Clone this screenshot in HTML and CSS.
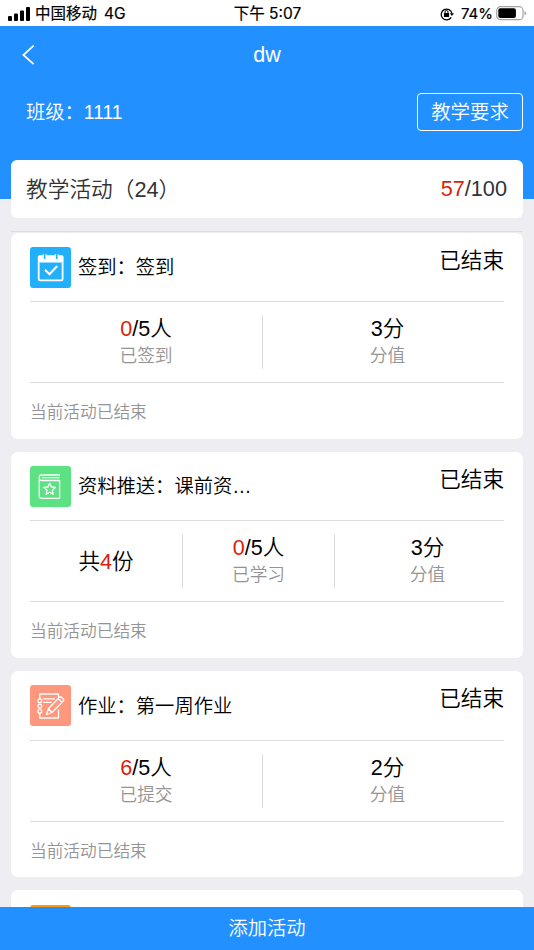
FILE: index.html
```html
<!DOCTYPE html>
<html lang="zh-CN">
<head>
<meta charset="utf-8">
<meta name="viewport" content="width=device-width, initial-scale=1">
<title>dw</title>
<link rel="stylesheet" href="styles.css">
</head>
<body>
<div class="app">
  <div class="status-bar">
    <div class="status-left">
      <svg class="signal" width="23" height="14" viewBox="0 0 23 14"><rect x="0" y="9" width="4" height="5" rx="1"/><rect x="6" y="6.5" width="4" height="7.5" rx="1"/><rect x="12" y="3.5" width="4" height="10.5" rx="1"/><rect x="18" y="0" width="4" height="14" rx="1"/></svg>
      <span class="carrier">中国移动</span><span>4G</span>
    </div>
    <div class="status-time">下午 5:07</div>
    <div class="status-right">
      <svg width="14" height="14" viewBox="0 0 14 14"><path d="M11.2 10.3A5.4 5.4 0 1 1 11.9 6.4" fill="none" stroke="#000" stroke-width="1.3"/><path d="M9.9 6.2h4L11.9 9z"/><rect x="3.9" y="6" width="5.2" height="4" rx=".6"/><path d="M5 6.3V5a1.5 1.5 0 0 1 3 0v1.3" fill="none" stroke="#000"/></svg>
      <span class="percent">74%</span>
      <svg width="31" height="15" viewBox="0 0 31 15"><rect x=".7" y=".7" width="26.3" height="13" rx="3.8" fill="none" stroke="#a4a4a4" stroke-width="1.2"/><rect x="2.3" y="2.3" width="17.6" height="9.8" rx="2"/><path d="M28.5 5v4.4q1.7-.8 1.7-2.2T28.5 5z" fill="#a4a4a4"/></svg>
    </div>
  </div>
  <header class="hero">
    <div class="nav">
      <svg class="back" width="13" height="20" viewBox="0 0 13 20"><path d="M11.6 .7 1.4 10l10.2 9.2" fill="none" stroke="#fff" stroke-width="1.7"/></svg>
      <h1>dw</h1>
    </div>
    <div class="class-row">
      <span>班级：1111</span>
      <button class="outline-button">教学要求</button>
    </div>
  </header>
  <section class="summary">
    <span class="summary-title">教学活动（24）</span>
    <span><em>57</em>/100</span>
  </section>
  <main class="list">
    <article class="card">
      <div class="card-head">
        <svg class="icon cyan" viewBox="0 0 41 41"><path d="M8.7 15.5V32q0 1.3 1.3 1.3h21.3q1.3 0 1.3-1.3V15.5" fill="none" stroke="#fff" stroke-width="1.8"/><path d="M7.8 15.5V10q0-1.8 1.8-1.8h4V11q0 1 1 1t1-1V8.200h10.200V11q0 1 1 1t1-1V8.200h4q1.800 0 1.800 1.800v5.500z" fill="#fff"/><path d="M13.200 7v3.500M16 7v3.500M25.300 7v3.500M28.100 7v3.500" stroke="#fff" stroke-width=".9"/><path d="M15 22.800l4.500 4.500 7.700-8.300" fill="none" stroke="#fff" stroke-width="2"/></svg>
        <h2>签到：签到</h2><span class="state">已结束</span>
      </div>
      <div class="stats two">
        <div class="stat"><b><em>0</em>/5人</b><small>已签到</small></div>
        <div class="stat"><b>3分</b><small>分值</small></div>
      </div>
      <p class="note">当前活动已结束</p>
    </article>
    <article class="card">
      <div class="card-head">
        <svg class="icon green" viewBox="0 0 41 41"><g fill="none" stroke="#fff" stroke-width="1.300" stroke-linejoin="round"><path d="M30 9H11.500Q9.300 9 9.300 11.300V30Q9.300 32.300 11.500 32.300H29.600V14.500H11.500Q9.300 14.500 9.300 12M12 11.700H29.600"/><path d="M19.700 17.300l1.700 3.700 4 .5-3 2.800.8 4-3.500-2-3.500 2 .8-4-3-2.800 4-.5z"/></g></svg>
        <h2>资料推送：课前资…</h2><span class="state">已结束</span>
      </div>
      <div class="stats three">
        <div class="stat"><b>共<em>4</em>份</b></div>
        <div class="stat"><b><em>0</em>/5人</b><small>已学习</small></div>
        <div class="stat"><b>3分</b><small>分值</small></div>
      </div>
      <p class="note">当前活动已结束</p>
    </article>
    <article class="card">
      <div class="card-head">
        <svg class="icon coral" viewBox="0 0 41 41"><g fill="none" stroke="#fff" stroke-width="1.300" stroke-linejoin="round"><path d="M9.800 14V9h18.700v3.500M9.800 28v5h18.700V24.500M13 13.800h12M13 17.300h8.500"/><path d="M16.500 29.500l1.800-5.800L29.500 12.200q1-1 2 0l1.800 1.800q1 1 0 2L22 27.500zM18.300 23.700l3.700 3.800M28.200 13.500l3.800 3.800"/><circle cx="9.800" cy="15.800" r="1.900"/><circle cx="9.800" cy="21" r="1.900"/><circle cx="9.800" cy="26.200" r="1.900"/></g></svg>
        <h2>作业：第一周作业</h2><span class="state">已结束</span>
      </div>
      <div class="stats two">
        <div class="stat"><b><em>6</em>/5人</b><small>已提交</small></div>
        <div class="stat"><b>2分</b><small>分值</small></div>
      </div>
      <p class="note">当前活动已结束</p>
    </article>
    <article class="card">
      <div class="card-head"><span class="icon orange"></span></div>
    </article>
  </main>
  <button class="add-button">添加活动</button>
</div>
</body>
</html>
```
FILE: styles.css
```css
* { box-sizing: border-box; }
body {
  margin: 0;
  color: #000;
  background: #eeedf2;
  font-family: "Liberation Sans", "Noto Sans CJK SC", sans-serif;
  font-weight: 350;
}
h1, h2, p { margin: 0; font-weight: 350; }
em { color: #dc1e0c; font-style: normal; }
svg { display: block; flex: none; }
button { font-family: inherit; font-weight: inherit; color: #fff; padding: 0; }
.app { height: 950px; display: flex; flex-direction: column; overflow: hidden; }

.status-bar {
  flex: none;
  height: 26px;
  display: grid;
  grid-template-columns: 1fr auto 1fr;
  align-items: center;
  padding: 0 7px 0 8px;
  background: #fff;
  font: 400 15.5px/26px Inter, "Noto Sans CJK SC", sans-serif;
}
.status-left, .status-right { display: flex; align-items: center; }
.status-right { justify-content: flex-end; }
.status-left span, .status-time { padding-top: 1px; -webkit-text-stroke: .2px #000; }
.carrier { margin: 0 7px 0 4px; }
.percent { margin: 0 3px 0 7px; font-size: 15px; -webkit-text-stroke: .2px #000; }

.hero { flex: none; height: 173px; color: #fff; background: #2290ff; }
.nav { height: 57px; display: grid; grid-template-columns: 1fr auto 1fr; align-items: center; padding: 0 22px; }
.nav h1 { font-size: 21.5px; line-height: 30px; }
.class-row {
  height: 58px;
  display: flex;
  align-items: center;
  justify-content: space-between;
  padding: 0 11px 0 26px;
  font-size: 19.3px;
}
.class-row span { padding-bottom: 2px; }
.outline-button {
  width: 106px;
  height: 38px;
  border: 1.5px solid #fff;
  border-radius: 4px;
  background: none;
  font-size: 19.4px;
  line-height: 34px;
}

.summary {
  flex: none;
  height: 58px;
  margin: -39px 11px 13px;
  padding: 0 16px 0 15px;
  display: flex;
  align-items: center;
  justify-content: space-between;
  border-radius: 6px;
  background: #fff;
  color: #333;
  font-size: 21.7px;
}
.summary-title { padding-bottom: 4px; }

.list { flex: 1; min-height: 0; overflow: hidden; margin: 0 11px; padding-top: .6px; border-top: 1px solid #dcdbe0; }
.card { height: 206.3px; margin-bottom: 13px; padding: 0 19px; border-radius: 7px; background: #fff; }
.card-head { height: 68.4px; display: flex; align-items: center; }
.icon { width: 41px; height: 41px; margin-top: 1px; border-radius: 3px; }
.cyan { background: #22b0fb; }
.green { background: #5de283; }
.coral { background: #ff967e; }
.orange { background: #ff9b0a; }
.card h2 { flex: 1; margin-left: 7px; padding-top: 2.5px; font-size: 19.3px; line-height: 28px; }
.state { margin-top: -12px; font-size: 21.6px; line-height: 30px; }

.stats {
  height: 82px;
  padding: 13px 0;
  display: grid;
  border-top: 1px solid #dcdcdc;
  border-bottom: 1px solid #dcdcdc;
}
.two { grid-template-columns: 232px 1fr; }
.three { grid-template-columns: 152px 152px 1fr; }
.stat { display: flex; flex-direction: column; align-items: center; justify-content: center; }
.stat + .stat { border-left: 1px solid #dcdcdc; }
.two .stat:last-child { padding-left: 8px; }
.three .stat:last-child { padding-left: 16px; }
.stat b { font-size: 21.6px; font-weight: 350; line-height: 27px; }
.stat small { padding-top: 1px; margin-bottom: -1px; color: #949494; font-size: 17.7px; line-height: 27px; }
.note { color: #949494; font-size: 16.7px; line-height: 59px; }

.add-button {
  flex: none;
  height: 43px;
  padding-bottom: 3px;
  border: 0;
  background: #2290ff;
  font-size: 19.3px;
}
```
